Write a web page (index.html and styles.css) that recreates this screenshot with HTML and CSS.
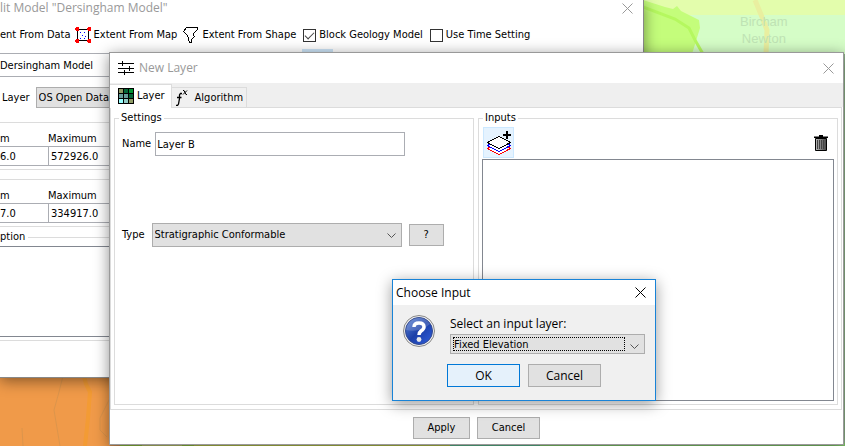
FILE: index.html
```html
<!DOCTYPE html>
<html lang="en">
<head>
<meta charset="utf-8">
<title>New Layer</title>
<link rel="stylesheet" href="styles.css">
</head>
<body>
<svg class="map land" viewBox="0 0 110 70" aria-hidden="true">
  <rect width="110" height="70" fill="#f09a49"/>
  <path d="M84 0L86 8L90 16L88 42L85 70" fill="none" stroke="#f39b34" stroke-width="4"/>
  <path d="M63 0L59 16L54 34L60 70M110 22L100 42L100 54L107 61M22 52L23 70" fill="none" stroke="#dc954c"/>
</svg>
<svg class="map park" viewBox="0 0 202 54" aria-hidden="true">
  <rect width="202" height="54" fill="#d5fdc7"/>
  <path d="M0 0H202V15H40L0 5Z" fill="#e3fdac"/>
  <path d="M0 0L22 7L30 9L34 6L38 11L56 20L57 28L49 54H0Z" fill="#c4fd7b"/>
  <path d="M0 7L32 19L46 28L52 40L60 54" fill="none" stroke="#b5f85f" stroke-width="3"/>
  <path d="M112 0L119 17L124 30L123 54" fill="none" stroke="#e9efa0" stroke-width="5"/>
</svg>
<p class="place">Bircham<br>Newton</p>
<div class="shore"></div>

<section class="window edit">
  <header class="titlebar">
    <h2>lit Model "Dersingham Model"</h2>
    <button class="close" aria-label="Close"><svg viewBox="0 0 11 11"><path d="M.5.5l10 10M10.5.5l-10 10"/></svg></button>
  </header>
  <div class="tools">
    <button class="tool first">ent From Data</button>
    <button class="tool"><svg class="icon" width="16" height="16" viewBox="0 0 16 16"><path d="M2.500 2.500h11v11h-11z" fill="#fff" stroke="#000"/><path d="M5 5h1v1H5zM9 5h1v1H9zM7 8h1v1H7zM10 9h1v1h-1zM5 11h1v1H5zM9 11h1v1H9z" fill="#00f"/><path d="M1 0h2l1 1v2L3 4H1L0 3V1zM13 0h2l1 1v2l-1 1h-2l-1-1V1zM1 12h2l1 1v2l-1 1H1l-1-1v-2zM13 12h2l1 1v2l-1 1h-2l-1-1v-2z" fill="red"/></svg>Extent From Map</button>
    <button class="tool"><svg class="icon" width="16" height="16" viewBox="0 0 16 16"><path d="M3.500.5H14.500V2.500L10.500 6.500V8.500L11.500 9.500L8.500 12.500V15.500H6.500L4.500 8.500L.5 4.500Z" fill="#fff" stroke="#000"/></svg>Extent From Shape</button>
    <label class="check"><input type="checkbox" checked>Block Geology Model</label>
    <label class="check"><input type="checkbox">Use Time Setting</label>
  </div>
  <span class="hotspot"></span>
  <input class="model" aria-label="Model name" value="Dersingham Model">
  <div class="base"><label for="base">Layer</label><select id="base"><option>OS Open Data</option></select></div>
  <div class="range">
    <label>m<input value="6.0"></label>
    <label>Maximum<input value="572926.0"></label>
  </div>
  <div class="range">
    <label>m<input value="7.0"></label>
    <label>Maximum<input value="334917.0"></label>
  </div>
  <fieldset class="notes"><legend>ption</legend><textarea aria-label="ption"></textarea></fieldset>
</section>

<section class="window layer">
  <header class="titlebar">
    <svg class="icon" width="16" height="14" viewBox="0 0 16 14"><path d="M0 2.500h16M0 7.500h16M0 11.500h16M4.500 0v5M11.500 5v5M6.500 9v5" stroke="#000"/></svg>
    <h2>New Layer</h2>
    <button class="close" aria-label="Close"><svg viewBox="0 0 11 11"><path d="M.5.5l10 10M10.5.5l-10 10"/></svg></button>
  </header>
  <nav class="tabs">
    <button class="tab on"><svg class="icon" width="16" height="16" viewBox="0 0 16 16"><path fill="#000" d="M0 0h16v16H0z"/><path d="M1 1h4v4H1zM11 11h4v4h-4z" fill="#8f9c66"/><path d="M6 1h4v4H6zM11 6h4v4h-4z" fill="#046437"/><path d="M11 1h4v4h-4z" fill="#009333"/><path d="M1 6h4v4H1zM6 6h4v4H6z" fill="#669c9a"/><path d="M1 11h4v4H1z" fill="#9ff"/><path d="M6 11h4v4H6z" fill="#92ccc6"/></svg>Layer</button>
    <button class="tab"><svg width="16" height="16" viewBox="0 0 16 16"><path d="M7 3.500H5.500L4.500 5V8.500L3.500 14L2.500 15.500H1M2 7.500H6.500" fill="none" stroke="#000" stroke-width="1.300"/><path d="M8 .5h1l2 4h1M12 .5L8 4.500" fill="none" stroke="#000"/></svg>Algorithm</button>
  </nav>
  <div class="pane">
    <fieldset class="group">
      <legend>Settings</legend>
      <div class="row name"><label for="name">Name</label><input id="name" value="Layer B"></div>
      <div class="row type"><label for="type">Type</label>
        <span class="combo"><select id="type"><option>Stratigraphic Conformable</option></select><svg viewBox="0 0 9 6"><path d="M.5.5l4 4l4-4"/></svg></span>
        <button class="btn help">?</button></div>
    </fieldset>
    <fieldset class="group">
      <legend>Inputs</legend>
      <div class="actions">
        <button class="add" aria-label="Add input"><svg class="icon" width="24" height="24" viewBox="0 0 24 24"><g fill="#fff"><path d="M.5 17.500L12 11.500L23.500 17.500L12 23.500Z" stroke="red"/><path d="M.5 14.500L12 8.500L23.500 14.500L12 20.500Z" stroke="#00f"/><path d="M.5 11.500L12 5.500L23.500 11.500L12 17.500Z" stroke="#000"/></g><path d="M16 4h8M20 0v8" stroke="#000" stroke-width="2"/></svg></button>
        <button class="bin" aria-label="Delete input"><svg width="14" height="16" viewBox="0 0 14 16"><defs><linearGradient id="metal"><stop stop-color="#bbb"/><stop offset="1" stop-color="#444"/></linearGradient></defs><path d="M5 0h4v1.500h5V3H0V1.500h5z"/><path d="M1.500 3.500h11v12h-11z" fill="url(#metal)" stroke="#000"/><path d="M3.500 5v9M5.500 5v9M7.500 5v9M9.500 5v9" stroke="#444"/></svg></button>
      </div>
      <div class="list"></div>
    </fieldset>
  </div>
  <footer class="commit"><button class="btn">Apply</button><button class="btn wide">Cancel</button></footer>
</section>

<section class="window dialog" role="dialog" aria-labelledby="ask">
  <header class="titlebar">
    <h2 id="ask">Choose Input</h2>
    <button class="close" aria-label="Close"><svg viewBox="0 0 11 11"><path d="M.5.5l10 10M10.5.5l-10 10"/></svg></button>
  </header>
  <div class="question">
    <svg width="32" height="32" viewBox="0 0 32 32"><defs><linearGradient id="ball" x2="1" y2="1"><stop stop-color="#5b84d6"/><stop offset=".5" stop-color="#1c3fa8"/><stop offset="1" stop-color="#2f5fe0"/></linearGradient></defs><circle cx="16" cy="16" r="15.500" fill="#eee" stroke="#888"/><circle cx="16" cy="16" r="13.500" fill="url(#ball)" stroke="#334a90"/><path d="M3 15A13 13 0 0 1 27 9Q17 18 3 15Z" fill="#fff" opacity=".18"/><path d="M11 12Q11 8 16 8Q21 8 21 12Q21 14 18 16Q16 17.500 16 20" fill="none" stroke="#fff" stroke-width="3.500"/><circle cx="16" cy="24.500" r="2.400" fill="#e8e8e8"/></svg>
    <div class="answer">
      <label for="input">Select an input layer:</label>
      <span class="combo focus"><select id="input"><option>Fixed Elevation</option></select><svg viewBox="0 0 9 6"><path d="M.5.5l4 4l4-4"/></svg></span>
    </div>
  </div>
  <footer class="reply"><button class="btn ok">OK</button><button class="btn">Cancel</button></footer>
</section>
</body>
</html>
```
FILE: styles.css
```css
* { box-sizing: border-box; }
body {
  margin: 0;
  height: 100vh;
  position: relative;
  overflow: hidden;
  background: #8fb58a;
  color: #000;
  font: 11px/14px "DejaVu Sans Condensed", "Noto Sans", sans-serif;
}
button, input, select, textarea { font: inherit; color: inherit; margin: 0; border-radius: 0; }
button { padding: 0; border: 0; background: none; }
select { appearance: none; }
h2, p { margin: 0; font-weight: normal; }
fieldset { margin: 0; padding: 0; border: 1px solid #dcdcdc; min-width: 0; }
.icon { shape-rendering: crispEdges; }

.map { position: absolute; }
.land { left: 0; bottom: 0; width: 110px; height: 70px; }
.park { right: 0; top: 0; width: 202px; height: 54px; }
.place {
  position: absolute;
  left: 740px;
  top: 13px;
  text-align: center;
  font: 13px/17px "Liberation Sans", sans-serif;
  color: #bfe3b4;
}
.shore {
  position: absolute;
  left: 110px;
  right: 0;
  bottom: 0;
  height: 3px;
  background: linear-gradient(90deg, #c98a4c 10px, #8fbe3c 10px 32px, #b9c26a 32px 72px, #8fbe3c 72px 84px, #b5c248 84px 340px, #5cb98c 340px 430px, #84cc6c 430px);
}

.window { position: absolute; background: #fff; box-shadow: 0 3px 14px rgba(0, 0, 0, .45); }
.titlebar { display: flex; align-items: center; color: #999; font: 12px/16px "Open Sans", "Noto Sans", sans-serif; }
.titlebar h2 { font-size: 12px; }
.close { margin-left: auto; width: 11px; height: 11px; display: flex; }
.close svg { width: 11px; height: 11px; fill: none; stroke: currentColor; }

.edit { left: 0; right: 201px; top: 0; bottom: 68px; border: solid #888; border-width: 0 1px 1px 0; display: flex; flex-direction: column; }
.edit .titlebar { height: 16px; padding-right: 10px; }
.tools { display: flex; align-items: center; gap: 6px; height: 16px; margin-top: 11px; }
.tool { display: flex; align-items: center; gap: 3px; white-space: nowrap; }
.tool.first { margin-right: -2px; }
.check { display: flex; align-items: center; gap: 3px; white-space: nowrap; margin-left: 1px; }
.check input { appearance: none; width: 13px; height: 13px; border: 1px solid #333; background: #fff; }
.check input:checked::after {
  content: "";
  display: block;
  width: 8px;
  height: 4px;
  margin: 2px 1px;
  border: solid #444;
  border-width: 0 0 1px 1px;
  transform: rotate(-45deg);
}
.hotspot { position: absolute; left: 302px; top: 49px; width: 31px; height: 8px; background: #cce4f7; }
.model { width: 300px; height: 24px; margin-top: 10px; padding: 0; border: 1px solid #abadb3; border-left: 0; }
.base { display: flex; align-items: center; gap: 6px; margin-top: 10px; padding-left: 2px; }
.base select { width: 120px; height: 21px; padding: 0 2px; border: 1px solid #adadad; background: #e1e1e1; }
.range { display: flex; margin-top: 9px; padding: 9px 0 3px; border: solid #dcdcdc; border-width: 1px 0; height: 48px; }
.base + .range { margin-top: 14px; }
.range label { display: flex; flex-direction: column; flex: 0 0 120px; }
.range label:first-child { flex-basis: 48px; }
.range input { width: 100%; height: 20px; padding: 0 2px; border: 1px solid #abadb3; }
.range label:first-child input { border-width: 1px 0; padding: 0; }
.notes { margin-top: 3px; border-left: 0; }
.notes legend { padding: 0 3px 0 0; }
.notes textarea { display: block; width: 100%; height: 91px; margin: 2px 0 3px; border: 1px solid #828790; border-left: 0; resize: none; }

.layer { left: 109px; right: 1px; top: 52px; bottom: 1px; border: 1px solid #999; display: flex; flex-direction: column; }
.layer .titlebar { flex: 0 0 30px; padding: 0 9px 0 8px; gap: 5px; }
.tabs { display: flex; align-items: flex-end; height: 24px; background: #efefef; }
.tab { display: flex; align-items: center; gap: 3px; height: 20px; padding: 0 3px; border: solid #dcdcdc; border-width: 1px 1px 0 0; background: #f0f0f0; }
.tab:not(.on) { gap: 4px; }
.tab.on { position: relative; height: 24px; margin-bottom: -1px; padding: 0 6px 1px 8px; background: #fff; }
.pane { flex: 1; display: grid; grid-template-columns: 1fr 1fr; gap: 4px; margin-right: 1px; padding: 3px 3px 4px; border: 1px solid #dcdcdc; }
.group { display: flex; flex-direction: column; }
.group legend { margin-left: 4px; padding: 0 2px; }
.row { display: flex; align-items: center; padding-left: 7px; }
.row.name { gap: 4px; margin-top: 7px; }
.row.type { gap: 7px; margin-top: 67px; }
.row.name input { width: 250px; height: 24px; padding: 0 1px; border: 1px solid #abadb3; }
.combo { position: relative; display: flex; width: 250px; height: 24px; border: 1px solid #adadad; background: #e1e1e1; }
.combo select { flex: 1; border: 0; padding: 0 2px; background: none; }
.combo svg { position: absolute; right: 5px; top: 9px; width: 9px; height: 6px; fill: none; stroke: #555; pointer-events: none; }
.btn { height: 22px; border: 1px solid #adadad; background: #e1e1e1; }
.help { width: 35px; }
.actions { display: flex; align-items: center; justify-content: space-between; padding: 2px 9px 1px 4px; }
.add { width: 31px; height: 31px; display: grid; place-items: center; border: 1px solid #cce8ff; background: #e5f3ff; }
.bin { display: flex; }
.list { flex: 1; margin: 0 3px 3px; border: 1px solid #828790; }
.commit { display: flex; justify-content: center; gap: 7px; padding: 7px 0 5px; }
.commit .btn { width: 57px; }
.commit .wide { width: 63px; }

.dialog { left: 392px; top: 279px; width: 264px; padding-bottom: 13px; border: 1px solid #1883d7; background: #f0f0f0; box-shadow: 0 3px 14px rgba(0, 0, 0, .4); font: 12px/16px "Open Sans", "Noto Sans", sans-serif; }
.dialog .titlebar { height: 25px; padding: 0 9px 0 3px; background: #fff; color: #000; }
.question { display: flex; gap: 15px; padding: 10px 10px 0; }
.answer { flex: 1; display: flex; flex-direction: column; gap: 2px; padding-top: 1px; }
.focus { width: auto; height: 20px; font: 11px/14px "DejaVu Sans Condensed", "Noto Sans", sans-serif; }
.focus select { margin: 2px 19px 2px 2px; padding: 0; border: 1px dotted #000; outline: 0; }
.reply { display: flex; justify-content: center; gap: 8px; margin-top: 10px; }
.reply .btn { width: 73px; height: 23px; }
.reply .ok { border-color: #0078d7; background: #e5f1fb; }
```
